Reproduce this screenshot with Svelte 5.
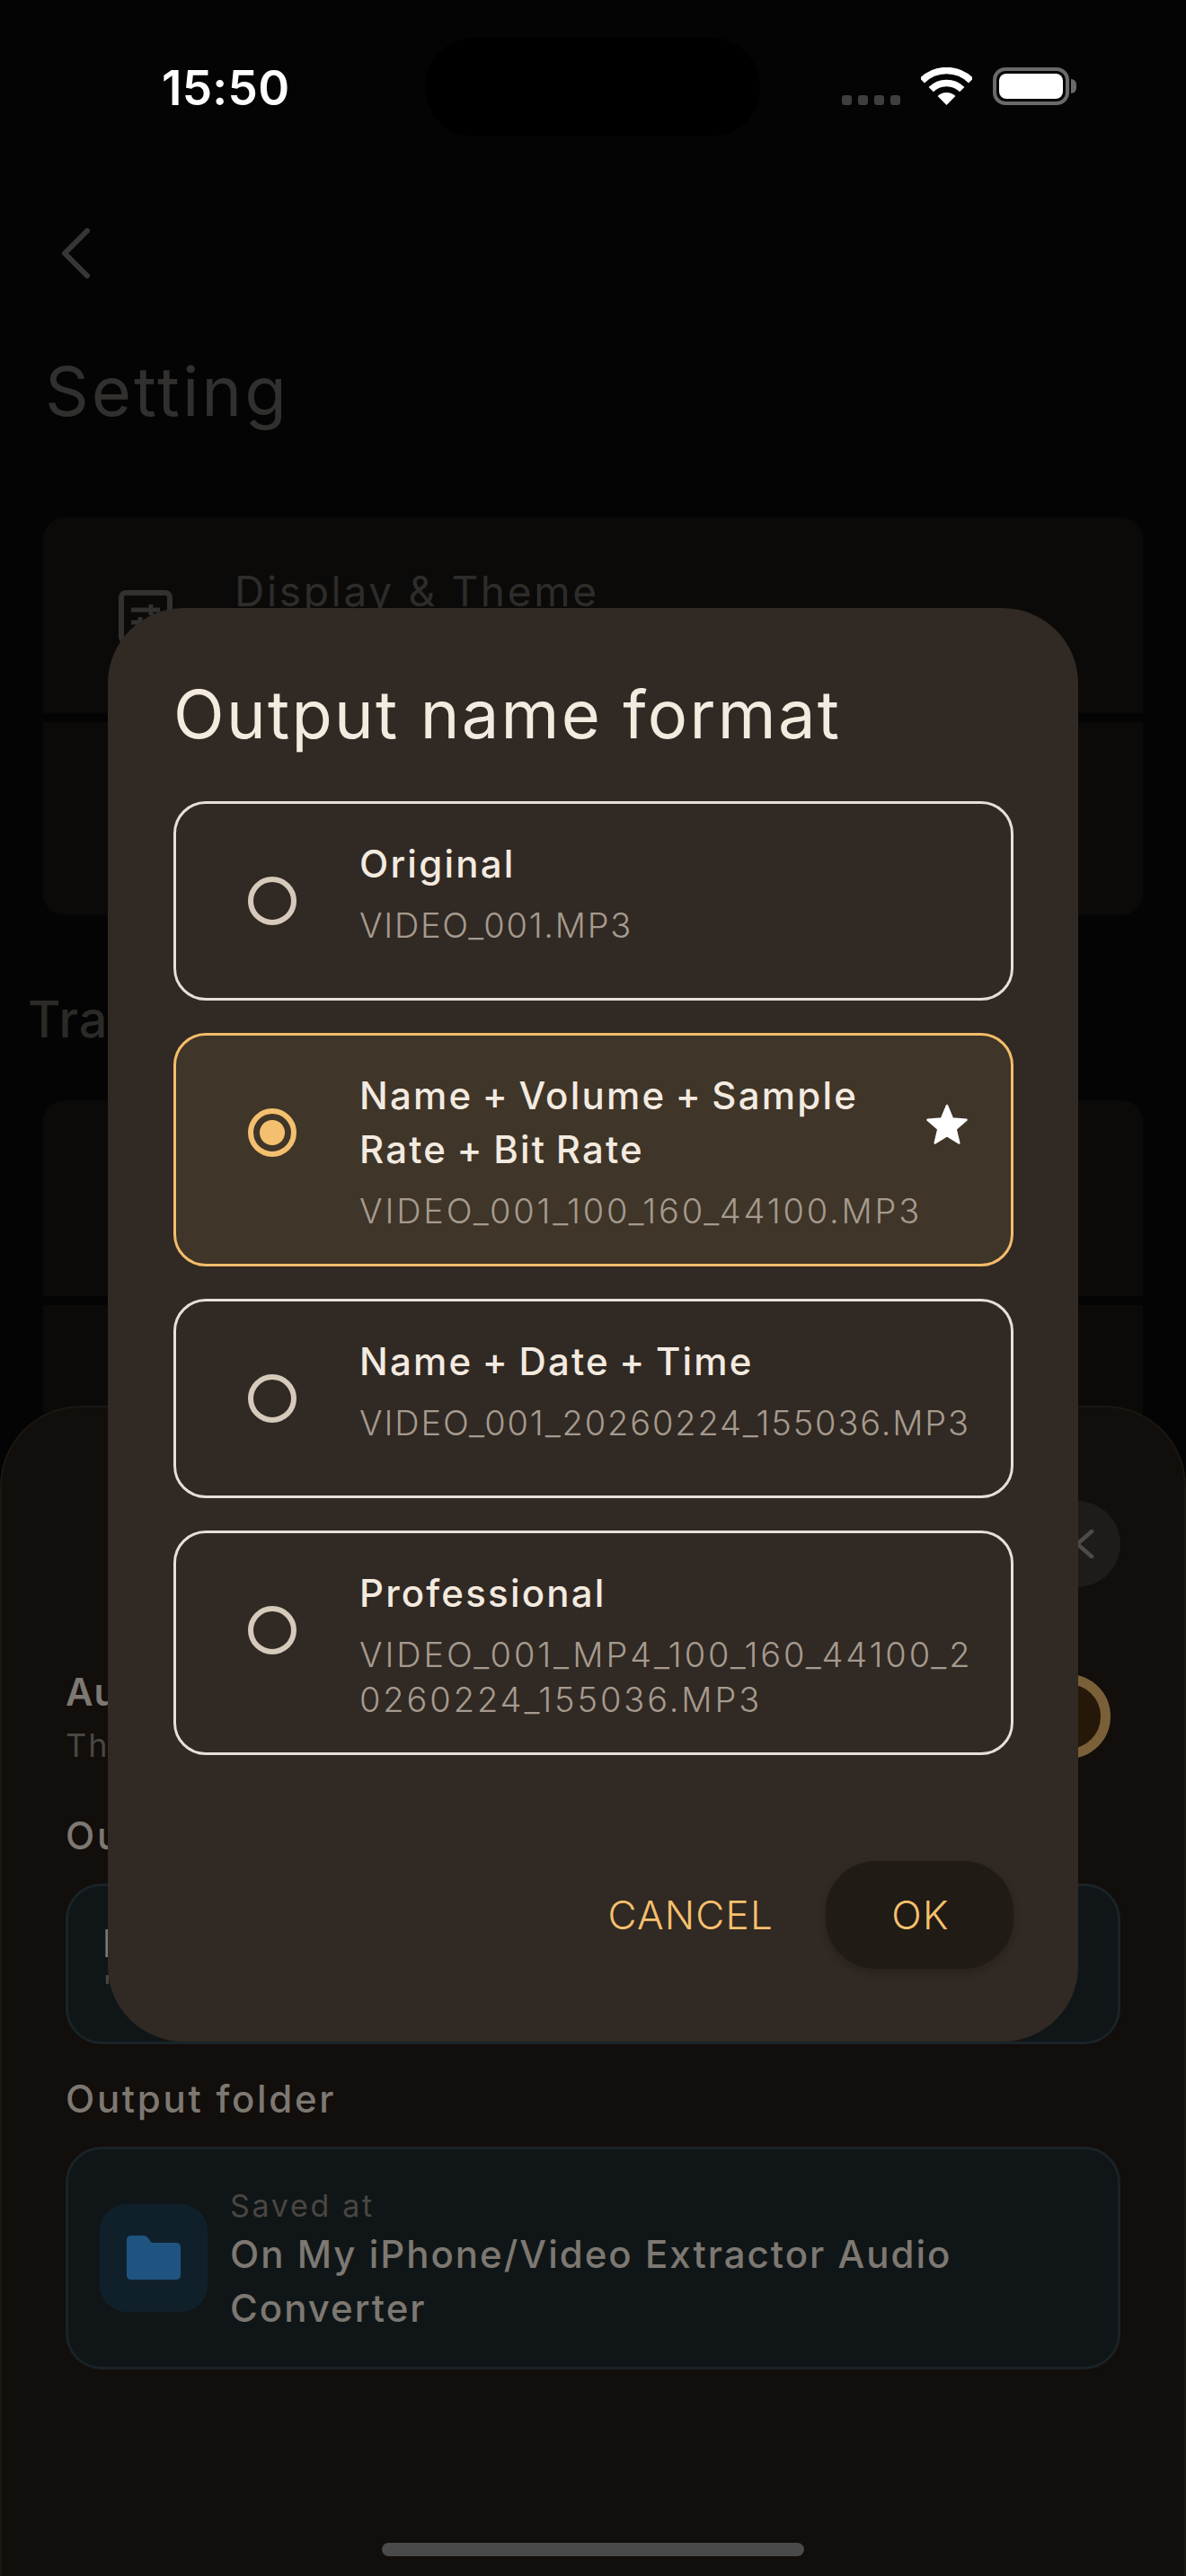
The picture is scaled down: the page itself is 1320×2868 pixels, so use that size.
<script lang="ts">
  const options = [
    { title: "Original", sample: "VIDEO_001.MP3", track: 1.7 },
    {
      title: "Name + Volume + Sample Rate + Bit Rate",
      sample: "VIDEO_001_100_160_44100.MP3",
      track: 2.8,
      selected: true,
    },
    { title: "Name + Date + Time", sample: "VIDEO_001_20260224_155036.MP3", track: 1.85 },
    {
      title: "Professional",
      sample: "VIDEO_001_MP4_100_160_44100_2\n0260224_155036.MP3",
      track: 2.9,
    },
  ];
</script>

<div class="screen">
  <header class="status">
    <span class="time">15:50</span>
    <div class="island"></div>
    <div class="dots"><i></i><i></i><i></i><i></i></div>
    <svg class="wifi" viewBox="0 0 57 42" width="57" height="42">
      <path d="M1.3 14.8A38.5 38.5 0 0 1 55.7 14.8" fill="none" stroke="#fff" stroke-width="7.5" />
      <path d="M11.2 24.7A24.5 24.5 0 0 1 45.8 24.7" fill="none" stroke="#fff" stroke-width="7.5" />
      <path d="M28.5 42L18.6 32.1A14 14 0 0 1 38.4 32.1Z" fill="#fff" />
    </svg>
    <div class="battery"><div class="charge"></div></div>
    <div class="nub"></div>
  </header>

  <svg class="back" viewBox="0 0 34 56" width="34" height="56">
    <path d="M30 3L5 28L30 53" fill="none" stroke="#383634" stroke-width="6" stroke-linecap="round" stroke-linejoin="round" />
  </svg>

  <h1 class="page-title">Setting</h1>

  <section class="card first">
    <div class="row">
      <svg class="row-icon" viewBox="0 0 60 60" width="60" height="60">
        <rect x="3" y="3" width="54" height="54" rx="5" fill="none" stroke="#33312f" stroke-width="6" />
        <path d="M14 22H46M14 36H32M24 30V42M36 16V28" fill="none" stroke="#33312f" stroke-width="5" />
      </svg>
      <span class="row-title">Display &amp; Theme</span>
    </div>
    <div class="row"></div>
  </section>

  <h2 class="section-title">Tra</h2>

  <section class="card second">
    <div class="row"></div>
    <div class="row"></div>
  </section>

  <div class="sheet">
    <div class="close">
      <svg viewBox="0 0 22 32" width="22" height="32">
        <path d="M19 2L3 16L19 30" fill="none" stroke="#4d4a47" stroke-width="4.5" stroke-linecap="round" stroke-linejoin="round" />
      </svg>
    </div>

    <div class="auto">
      <div>
        <div class="auto-title">Au</div>
        <div class="auto-sub">Th</div>
      </div>
      <div class="toggle"></div>
    </div>

    <div class="label output-label">Ou</div>
    <div class="field name-field">
      <div class="name-main">N</div>
      <div class="name-sub">'</div>
    </div>

    <div class="label folder-label">Output folder</div>
    <div class="field folder-field">
      <div class="folder-icon">
        <svg viewBox="0 0 60 50" width="60" height="50">
          <path d="M0 5Q0 0 5 0H19Q22 0 24 3L28 8H55Q60 8 60 13V44Q60 49 55 49H5Q0 49 0 44Z" fill="#1f5480" />
        </svg>
      </div>
      <div class="folder-text">
        <div class="saved">Saved at</div>
        <div class="path">On My iPhone/Video Extractor Audio Converter</div>
      </div>
    </div>

    <div class="home"></div>
  </div>

  <div class="dialog">
    <h2 class="dialog-title">Output name format</h2>

    <div class="options">
      {#each options as opt}
        <div class="option" class:selected={opt.selected}>
          <span class="radio"></span>
          <div class="option-body">
            <div class="option-title">{opt.title}</div>
            <div class="option-sample" style="letter-spacing: {opt.track}px">{opt.sample}</div>
          </div>
          {#if opt.selected}
            <svg class="star" viewBox="0 0 48 48" width="48" height="48">
              <path d="M24 3L30 17.5L45.5 18.8L33.6 29L37.3 44.5L24 36.2L10.7 44.5L14.4 29L2.5 18.8L18 17.5Z" fill="#fff" stroke="#fff" stroke-width="2.5" stroke-linejoin="round" />
            </svg>
          {/if}
        </div>
      {/each}
    </div>

    <div class="actions">
      <span class="cancel">CANCEL</span>
      <span class="ok">OK</span>
    </div>
  </div>
</div>

<style>
  :global(body) {
    margin: 0;
    background: #040404;
  }

  .screen {
    position: relative;
    width: 1320px;
    height: 2868px;
    overflow: hidden;
    background: #040404;
    font-family: Inter, "Noto Sans", sans-serif;
  }

  .status {
    height: 154px;
    position: relative;
    display: flex;
    align-items: flex-start;
  }

  .time {
    margin: 66px 0 0 180px;
    font-size: 53px;
    font-weight: 600;
    letter-spacing: 0.3px;
    color: #fff;
    line-height: 64px;
  }

  .island {
    position: absolute;
    left: 473px;
    top: 42px;
    width: 373px;
    height: 110px;
    border-radius: 55px;
    background: #000;
  }

  .dots {
    position: absolute;
    left: 937px;
    top: 106px;
    display: flex;
    gap: 7px;
  }

  .dots i {
    width: 11px;
    height: 11px;
    border-radius: 3px;
    background: #3e3e3e;
  }

  .wifi {
    position: absolute;
    left: 1025px;
    top: 75px;
  }

  .battery {
    position: absolute;
    left: 1105px;
    top: 75px;
    width: 85px;
    height: 42px;
    box-sizing: border-box;
    border: 4px solid #6a6a6a;
    border-radius: 14px;
    padding: 3px;
  }

  .charge {
    height: 100%;
    background: #fff;
    border-radius: 8px;
  }

  .nub {
    position: absolute;
    left: 1192px;
    top: 88px;
    width: 6px;
    height: 16px;
    border-radius: 0 6px 6px 0;
    background: #6a6a6a;
  }

  .back {
    display: block;
    margin: 100px 0 0 67px;
  }

  .page-title {
    margin: 80px 0 0 50px;
    font-size: 76px;
    font-weight: 400;
    letter-spacing: 3px;
    line-height: 90px;
    color: #31302e;
  }

  .card {
    margin: 0 48px;
    display: flex;
    flex-direction: column;
    gap: 10px;
  }

  .card.first {
    margin-top: 96px;
  }

  .row {
    background: #0b0a09;
    height: 218px;
    display: flex;
    align-items: flex-start;
    position: relative;
  }

  .row:first-child {
    border-radius: 24px 24px 0 0;
  }

  .row:last-child {
    border-radius: 0 0 24px 24px;
    height: 215px;
  }

  .row-icon {
    margin: 81px 0 0 84px;
  }

  .row-title {
    margin: 52px 0 0 69px;
    font-size: 46px;
    letter-spacing: 2.7px;
    line-height: 60px;
    color: #2e2c2a;
  }

  .section-title {
    margin: 86px 0 0 31px;
    font-size: 56px;
    font-weight: 500;
    letter-spacing: 1px;
    line-height: 60px;
    color: #2b2a26;
  }

  .card.second {
    margin-top: 60px;
  }

  .sheet {
    position: absolute;
    left: 0;
    right: 0;
    top: 1565px;
    bottom: 0;
    background: #120e0b;
    border: 2px solid #1b1712;
    border-bottom: 0;
    box-sizing: border-box;
    border-radius: 90px 90px 0 0;
    padding: 0 71px;
  }

  .close {
    position: absolute;
    left: 1149px;
    top: 104px;
    width: 96px;
    height: 96px;
    border-radius: 50%;
    background: #1e1b18;
    display: flex;
    align-items: center;
    justify-content: center;
    padding-left: 16px;
    box-sizing: border-box;
  }

  .auto {
    margin-top: 290px;
    display: flex;
    align-items: flex-start;
    justify-content: space-between;
  }

  .auto-title {
    font-size: 42px;
    font-weight: 600;
    letter-spacing: 1px;
    line-height: 54px;
    color: #7d7872;
  }

  .auto-sub {
    margin-top: 7px;
    font-size: 36px;
    letter-spacing: 2px;
    line-height: 50px;
    color: #4a4642;
  }

  .toggle {
    width: 94px;
    height: 94px;
    box-sizing: border-box;
    border: 11px solid #7a6038;
    border-radius: 50%;
    background: #251808;
    margin: 7px 11px 0 0;
  }

  .label {
    font-size: 42px;
    font-weight: 500;
    letter-spacing: 2.7px;
    line-height: 56px;
    color: #7d7872;
  }

  .output-label {
    margin-top: 48px;
  }

  .field {
    box-sizing: border-box;
    background: #101617;
    border: 3px solid #1a2327;
    border-radius: 40px;
    width: 1174px;
  }

  .name-field {
    margin-top: 25px;
    height: 179px;
    padding: 36px 38px;
  }

  .name-main {
    font-size: 42px;
    line-height: 56px;
    font-weight: 500;
    color: #7d7872;
  }

  .name-sub {
    font-size: 36px;
    line-height: 40px;
    color: #4a4642;
  }

  .folder-label {
    margin-top: 33px;
  }

  .folder-field {
    margin-top: 25px;
    height: 248px;
    display: flex;
    align-items: center;
    gap: 25px;
    padding: 6px 35px 0;
  }

  .folder-icon {
    flex: none;
    width: 120px;
    height: 120px;
    margin-top: -6px;
    border-radius: 30px;
    background: #10202b;
    display: flex;
    align-items: center;
    justify-content: center;
  }

  .saved {
    font-size: 34px;
    letter-spacing: 2.7px;
    line-height: 44px;
    color: #4a4642;
  }

  .path {
    margin-top: 2px;
    font-size: 42px;
    font-weight: 500;
    letter-spacing: 2px;
    line-height: 60px;
    color: #7d7872;
  }

  .home {
    position: absolute;
    left: 423px;
    bottom: 22px;
    width: 470px;
    height: 15px;
    border-radius: 8px;
    background: #4a4a4a;
  }

  .dialog {
    position: absolute;
    left: 120px;
    top: 677px;
    width: 1080px;
    height: 1596px;
    box-sizing: border-box;
    padding: 0 72px 81px 73px;
    background: #312923;
    border-radius: 84px;
    display: flex;
    flex-direction: column;
  }

  .dialog-title {
    margin: 70px 0 0 0;
    font-size: 74px;
    font-weight: 400;
    letter-spacing: 2.3px;
    line-height: 96px;
    color: #f3eae0;
  }

  .options {
    margin-top: 49px;
    display: flex;
    flex-direction: column;
    gap: 36px;
  }

  .option {
    box-sizing: border-box;
    min-height: 222px;
    border: 3px solid #e6e0d8;
    border-radius: 36px;
    padding: 37px 36px 34px 80px;
    display: flex;
    align-items: flex-start;
    gap: 70px;
  }

  .option.selected {
    background: #3f3528;
    border-color: #f4bd6b;
  }

  .radio {
    flex: none;
    box-sizing: border-box;
    width: 54px;
    height: 54px;
    margin-top: 44px;
    border: 6px solid #d6cabb;
    border-radius: 50%;
  }

  .selected .radio {
    border-color: #f4bf6f;
    background: radial-gradient(circle, #f4bf6f 13.5px, transparent 14.5px);
  }

  .option-body {
    flex: 1;
    min-width: 0;
  }

  .option-title {
    font-size: 42px;
    font-weight: 500;
    letter-spacing: 2.2px;
    word-spacing: -3px;
    line-height: 60px;
    color: #f3eae0;
  }

  .option-sample {
    margin-top: 13px;
    font-size: 38px;
    font-weight: 300;
    line-height: 50px;
    color: #a59a8e;
    white-space: pre;
  }

  .star {
    flex: none;
    margin: 38px 11px 0 -31px;
  }

  .actions {
    margin-top: auto;
    display: flex;
    align-items: center;
    justify-content: flex-end;
    gap: 58px;
  }

  .cancel,
  .ok {
    font-size: 44px;
    font-weight: 300;
    letter-spacing: 1.2px;
    color: #f6c06e;
  }

  .ok {
    width: 209px;
    height: 120px;
    padding-left: 2px;
    box-sizing: border-box;
    border-radius: 56px;
    background: #201b15;
    display: flex;
    align-items: center;
    justify-content: center;
    box-shadow: 0 4px 10px rgba(0, 0, 0, 0.2);
  }
</style>
